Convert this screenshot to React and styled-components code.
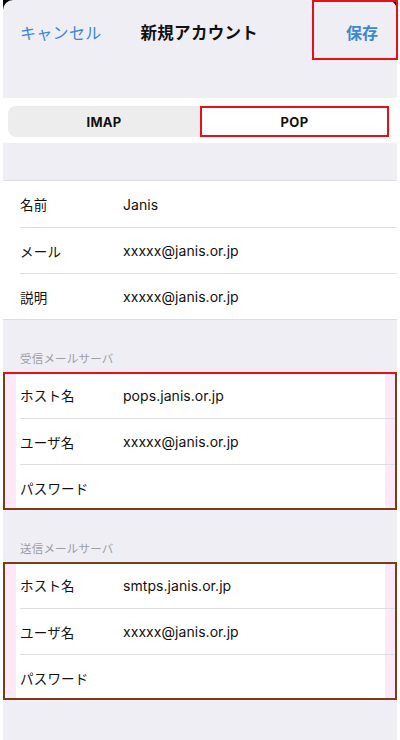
import React from 'react'
import styled, { createGlobalStyle } from 'styled-components'

const colors = {
  page: '#FFFFFF',
  grouped: '#EFEEF4',
  cell: '#FFFFFF',
  text: '#111111',
  header: '#9E9DA3',
  blue: '#3A87D4',
  hairline: '#DEDDE2',
  segment: '#EDEDED',
  mark: '#E5101A',
  markDark: '#74401A',
  pink: '#FDE8F8'
}

const GlobalStyle = createGlobalStyle`
  html, body {
    margin: 0;
    padding: 0;
    background: ${colors.page};
  }
  body {
    font-family: Inter, "Noto Sans CJK JP", sans-serif;
    color: ${colors.text};
    -webkit-font-smoothing: antialiased;
  }
`

// ======================
// FRAME
// ======================

const Page = styled.div`
  width: 400px;
  height: 740px;
  overflow: hidden;
  padding: 0 3px;
  box-sizing: border-box;
  background: ${colors.page};
`

const Screen = styled.div`
  height: 100%;
  background: linear-gradient(#000 0 12px, ${colors.grouped} 12px);
  display: flex;
  flex-direction: column;
`

// ======================
// NAV
// ======================

const NavBar = styled.header`
  height: 98px;
  flex-shrink: 0;
  background: ${colors.grouped};
  border-radius: 10px 10px 0 0;
  display: flex;
  align-items: flex-start;
  position: relative;
`

const NavButton = styled.button`
  background: none;
  border: none;
  margin: 0;
  padding: 0;
  font-family: inherit;
  font-size: 16px;
  color: ${colors.blue};
  font-weight: ${props => props.bold ? 700 : 400};
`

const CancelButton = styled(NavButton)`
  margin: 20px 0 0 17px;
  letter-spacing: 0.3px;
`

const SaveButton = styled(NavButton)`
  position: absolute;
  right: -1px;
  top: 0;
  width: 86px;
  height: 60px;
  box-sizing: border-box;
  border: 2px solid ${colors.mark};
  padding: 4px 0 0 32px;
  text-align: left;
`

const Title = styled.h1`
  margin: 20px 0 0 39px;
  font-size: 16.5px;
  font-weight: 700;
  letter-spacing: 0.3px;
`

// ======================
// SEGMENTED CONTROL
// ======================

const SegmentStrip = styled.div`
  background: ${colors.cell};
  height: 45px;
  flex-shrink: 0;
  padding: 8px 8px 0 5px;
  box-sizing: border-box;
`

const Segments = styled.div`
  display: flex;
  height: 31px;
  width: 381px;
  border-radius: 8px;
  background: ${colors.segment};
`

const Segment = styled.div`
  flex: 0 0 ${props => props.w}px;
  display: flex;
  align-items: center;
  justify-content: center;
  padding-top: 1px;
  font-size: 13px;
  font-weight: 700;
  letter-spacing: 0.3px;
  box-sizing: border-box;
  background: ${props => props.active ? colors.cell : 'transparent'};
  border: ${props => props.active ? `2px solid ${colors.mark}` : 'none'};
`

// ======================
// GROUPS
// ======================

const Spacer = styled.div`
  height: ${props => props.h}px;
  flex-shrink: 0;
`

const SectionHeader = styled.div`
  height: 52px;
  flex-shrink: 0;
  padding: 30px 0 0 17px;
  box-sizing: border-box;
  font-size: 11.5px;
  color: ${colors.header};
  letter-spacing: 0.2px;
`

const Group = styled.section`
  background: ${colors.cell};
  border-top: 1px solid ${colors.hairline};
  border-bottom: 1px solid ${colors.hairline};
  flex-shrink: 0;
`

const MarkedGroup = styled.section`
  position: relative;
  flex-shrink: 0;
  background: linear-gradient(to right, ${colors.pink} 0 13px, ${colors.cell} 13px calc(100% - 12px), ${colors.pink} calc(100% - 12px));
  box-shadow: 0 2px 0 ${colors.pink};

  &::after {
    content: '';
    position: absolute;
    inset: 0;
    border: 2px solid ${colors.markDark};
    border-top-color: ${props => props.redTop ? colors.mark : colors.markDark};
    pointer-events: none;
  }
`

const Row = styled.div`
  display: flex;
  align-items: center;
  height: 46px;
  margin-left: 17px;
  box-sizing: border-box;
  & + & {
    border-top: 1px solid ${colors.hairline};
  }
`

const Label = styled.div`
  width: 103px;
  font-size: 13.5px;
  letter-spacing: 0.2px;
`

const Value = styled.div`
  font-size: 14px;
  letter-spacing: 0.05px;
`

const Fields = ({ rows }) => rows.map(([label, value]) => (
  <Row key={label}>
    <Label>{label}</Label>
    <Value>{value}</Value>
  </Row>
))

const account = [
  ['名前', 'Janis'],
  ['メール', 'xxxxx@janis.or.jp'],
  ['説明', 'xxxxx@janis.or.jp']
]

const incoming = [
  ['ホスト名', 'pops.janis.or.jp'],
  ['ユーザ名', 'xxxxx@janis.or.jp'],
  ['パスワード', '']
]

const outgoing = [
  ['ホスト名', 'smtps.janis.or.jp'],
  ['ユーザ名', 'xxxxx@janis.or.jp'],
  ['パスワード', '']
]

export default function App () {
  return (
    <Page>
      <GlobalStyle />
      <Screen>
        <NavBar>
          <CancelButton>キャンセル</CancelButton>
          <Title>新規アカウント</Title>
          <SaveButton bold>保存</SaveButton>
        </NavBar>
        <SegmentStrip>
          <Segments>
            <Segment w={192}>IMAP</Segment>
            <Segment w={189} active>POP</Segment>
          </Segments>
        </SegmentStrip>
        <Spacer h={37} />
        <Group>
          <Fields rows={account} />
        </Group>
        <SectionHeader>受信メールサーバ</SectionHeader>
        <MarkedGroup redTop>
          <Fields rows={incoming} />
        </MarkedGroup>
        <SectionHeader>送信メールサーバ</SectionHeader>
        <MarkedGroup>
          <Fields rows={outgoing} />
        </MarkedGroup>
      </Screen>
    </Page>
  )
}
